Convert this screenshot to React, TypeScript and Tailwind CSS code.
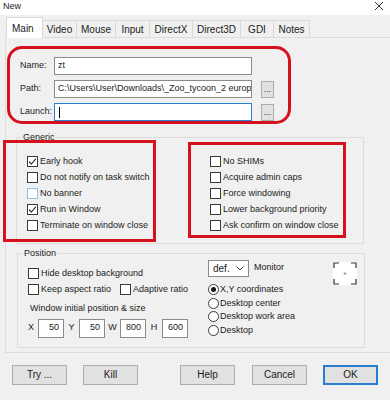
import React from 'react';

const font = "font-['Liberation_Sans',Arial,sans-serif]";

function CheckBox({ checked = false, hover = false }: { checked?: boolean; hover?: boolean }) {
  return (
    <span
      className={`w-[11px] h-[11px] shrink-0 border bg-white flex items-center justify-center ${
        hover ? 'border-[#8cbfe2]' : 'border-[#3a3a3a]'
      }`}
    >
      {checked && (
        <svg width="9" height="9" viewBox="0 0 9 9">
          <path d="M1 4.6 L3.4 7 L8 1.6" stroke="#222" strokeWidth="1.1" fill="none" />
        </svg>
      )}
    </span>
  );
}

function CheckRow({ label, checked, hover, className = '' }: { label: string; checked?: boolean; hover?: boolean; className?: string }) {
  return (
    <div className={`flex items-center h-[16px] gap-[2px] ${className}`}>
      <CheckBox checked={checked} hover={hover} />
      <span className="whitespace-nowrap">{label}</span>
    </div>
  );
}

function Radio({ label, selected = false }: { label: string; selected?: boolean }) {
  return (
    <div className="flex items-center h-[13.5px] gap-[1px]">
      <span className="w-[11px] h-[11px] rounded-full border border-[#3a3a3a] bg-white flex items-center justify-center shrink-0">
        {selected && <span className="w-[5px] h-[5px] rounded-full bg-[#1a1a1a]" />}
      </span>
      <span className="whitespace-nowrap">{label}</span>
    </div>
  );
}

function Button({ label, primary = false, className = '' }: { label: string; primary?: boolean; className?: string }) {
  return (
    <div
      className={`w-[55px] h-[20px] flex items-center justify-center bg-[#e1e1e1] text-[10px] ${
        primary ? 'border-2 border-[#2a7bd4]' : 'border border-[#adadad]'
      } ${className}`}
    >
      {label}
    </div>
  );
}

function NumBox({ value }: { value: string }) {
  return (
    <div className="w-[26px] h-[19px] border border-[#8a8a8a] bg-white flex justify-end pr-[4px] pt-[1px] leading-[12px]">
      {value}
    </div>
  );
}

const tabs = [
  { name: 'Video', w: 'w-[34px]' },
  { name: 'Mouse', w: 'w-[39px]' },
  { name: 'Input', w: 'w-[34px]' },
  { name: 'DirectX', w: 'w-[43px]' },
  { name: 'Direct3D', w: 'w-[48px]' },
  { name: 'GDI', w: 'w-[33px]' },
  { name: 'Notes', w: 'w-[36px]' },
];

export default function App() {
  return (
    <div className={`relative w-[390px] h-[400px] overflow-hidden bg-[#f0f0f0] text-[#1b1b1b] text-[9px] ${font}`}>
      {/* title bar */}
      <div className="h-[15px] bg-white flex items-center justify-between pl-[3px] pr-[6px]">
        <span className="text-[9px] leading-[10px] -mt-[4px]">New</span>
        <svg width="10" height="10" viewBox="0 0 10 10" className="-mt-[4px]">
          <path d="M1 1 L9 9 M9 1 L1 9" stroke="#333" strokeWidth="1" />
        </svg>
      </div>

      {/* tabs */}
      <div className="mt-[2px] h-[20px] flex items-end pl-[6px] text-[10px]">
        <div className="relative z-10 w-[37px] h-[21px] -mb-px bg-white border border-b-0 border-[#d9d9d9] flex items-center pl-[5px]">
          Main
        </div>
        {tabs.map((t) => (
          <div
            key={t.name}
            className={`${t.w} h-[17px] border border-l-0 border-b-0 border-[#d9d9d9] flex items-center justify-center`}
          >
            {t.name}
          </div>
        ))}
      </div>

      {/* tab panel */}
      <div className="ml-[5px] border-l border-t border-b border-[#dcdcdc] pb-[4px]">
        {/* name / path / launch */}
        <div className="ml-[1px] mt-[8px] w-[284px] h-[78px] border-[3px] border-[#d4111d] rounded-[15px] pl-[10px] pt-[8px] flex flex-col gap-[5px]">
          <div className="flex items-center h-[18px]">
            <span className="w-[34px]">Name:</span>
            <div className="w-[198px] h-[18px] border border-[#8a8a8a] bg-white flex items-center pl-[3px]">zt</div>
          </div>
          <div className="flex items-center h-[18px]">
            <span className="w-[34px]">Path:</span>
            <div className="w-[198px] h-[18px] border border-[#8a8a8a] bg-white flex items-center pl-[3px] overflow-hidden whitespace-nowrap">
              C:\Users\User\Downloads\_Zoo_tycoon_2 europ
            </div>
            <div className="ml-[9px] w-[13px] h-[17px] border border-[#adadad] bg-[#e1e1e1] flex items-end justify-center pb-[3px] leading-none">
              ...
            </div>
          </div>
          <div className="flex items-center h-[18px]">
            <span className="w-[34px]">Launch:</span>
            <div className="w-[198px] h-[18px] border border-[#2b7fd6] bg-white flex items-center pl-[4px]">
              <span className="w-px h-[11px] bg-black" />
            </div>
            <div className="ml-[9px] w-[13px] h-[17px] border border-[#adadad] bg-[#e1e1e1] flex items-end justify-center pb-[3px] leading-none">
              ...
            </div>
          </div>
        </div>

        {/* Generic */}
        <fieldset className="ml-[10px] mt-[7.5px] w-[348px] border border-[#dcdcdc] px-0 pb-[9px]">
          <legend className="ml-[5px] px-[1px] leading-[11px]">Generic</legend>
          <div className="flex pl-[10px] pt-[11px]">
            <div className="w-[183px] flex flex-col">
              <CheckRow label="Early hook" checked />
              <CheckRow label="Do not notify on task switch" />
              <CheckRow label="No banner" hover />
              <CheckRow label="Run in Window" checked />
              <CheckRow label="Terminate on window close" />
            </div>
            <div className="flex flex-col">
              <CheckRow label="No SHIMs" />
              <CheckRow label="Acquire admin caps" />
              <CheckRow label="Force windowing" />
              <CheckRow label="Lower background priority" />
              <CheckRow label="Ask confirm on window close" />
            </div>
          </div>
        </fieldset>

        {/* Position */}
        <fieldset className="ml-[11px] mt-[4.5px] w-[348px] border border-[#dcdcdc] px-0 pb-[9px]">
          <legend className="ml-[5px] px-[1px] leading-[11px]">Position</legend>
          <div className="flex pl-[10px]">
            <div className="w-[180px] pt-[6.5px] flex flex-col">
              <CheckRow label="Hide desktop background" />
              <div className="flex">
                <CheckRow label="Keep aspect ratio" className="w-[92px]" />
                <CheckRow label="Adaptive ratio" />
              </div>
              <div className="mt-[4px] ml-[2px] h-[12px] leading-[12px] whitespace-nowrap">Window initial position &amp; size</div>
              <div className="mt-[5px] flex items-center">
                <span className="w-[10px]">X</span>
                <NumBox value="50" />
                <span className="w-[15px] text-center">Y</span>
                <NumBox value="50" />
                <span className="w-[15px] text-center">W</span>
                <NumBox value="800" />
                <span className="w-[16px] text-center">H</span>
                <NumBox value="600" />
              </div>
            </div>
            <div className="pt-[0.5px] flex flex-col">
              <div className="flex items-center h-[17px]">
                <div className="w-[41px] h-[17px] border border-[#8a8a8a] bg-white flex items-center justify-between pl-[4px] pr-[4px] text-[10px]">
                  <span>def.</span>
                  <svg width="8" height="5" viewBox="0 0 8 5">
                    <path d="M0.5 0.5 L4 4 L7.5 0.5" stroke="#444" strokeWidth="1" fill="none" />
                  </svg>
                </div>
                <span className="ml-[5px]">Monitor</span>
              </div>
              <div className="mt-[6.5px] flex flex-col">
                <Radio label="X,Y coordinates" selected />
                <Radio label="Desktop center" />
                <Radio label="Desktop work area" />
                <Radio label="Desktop" />
              </div>
            </div>
            <div className="ml-auto mr-[7px] mt-[2.5px]">
              <svg width="24" height="23" viewBox="0 0 24 23">
                <rect x="0" y="0" width="24" height="23" fill="#fff" />
                <path
                  d="M1 6 V1 H6 M18 1 H23 V6 M23 17 V22 H18 M6 22 H1 V17"
                  stroke="#333"
                  strokeWidth="1.2"
                  fill="none"
                />
                <path d="M12 10 V13 M10.5 11.5 H13.5" stroke="#888" strokeWidth="0.8" />
              </svg>
            </div>
          </div>
        </fieldset>
      </div>

      {/* buttons */}
      <div className="mt-[12px] flex">
        <Button label="Try ..." className="ml-[12px]" />
        <Button label="Kill" className="ml-[16px]" />
        <Button label="Help" className="ml-[42px]" />
        <Button label="Cancel" className="ml-[17px]" />
        <Button label="OK" primary className="ml-[16px]" />
      </div>

      {/* red annotation frames over the Generic options */}
      <div className="absolute left-[3px] top-[140px] w-[153px] h-[102px] border-[3px] border-[#d4111d]" />
      <div className="absolute left-[188px] top-[142px] w-[158px] h-[96px] border-[3px] border-[#d4111d]" />
    </div>
  );
}
